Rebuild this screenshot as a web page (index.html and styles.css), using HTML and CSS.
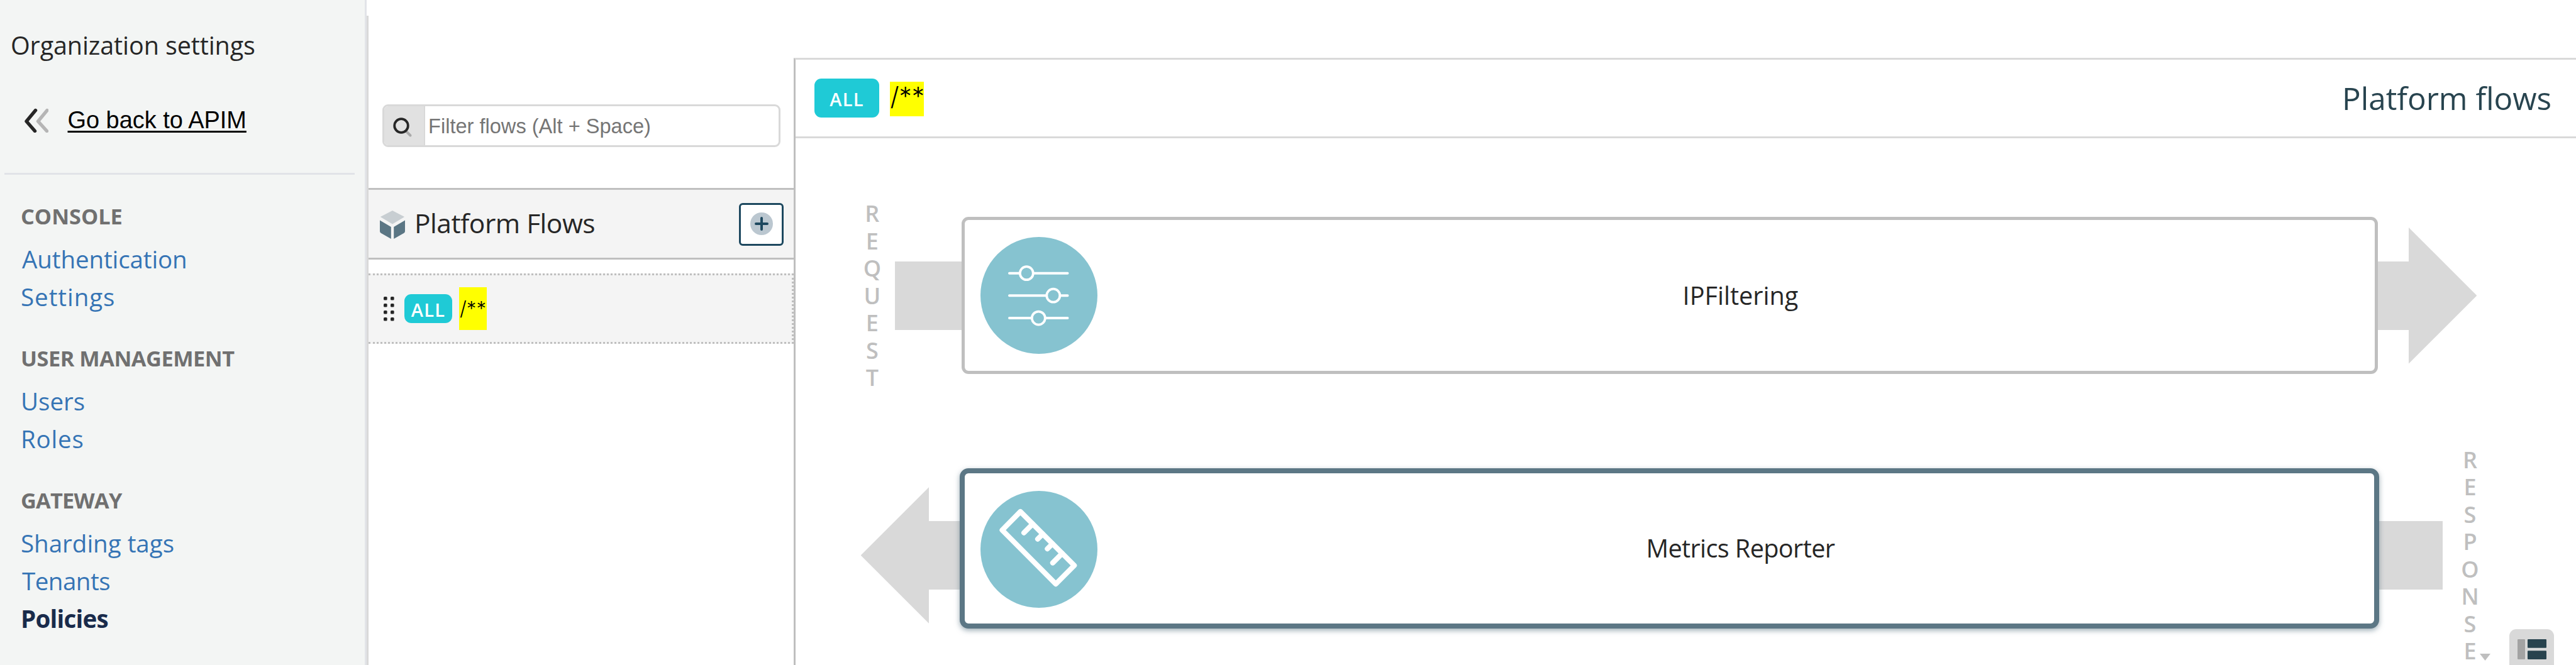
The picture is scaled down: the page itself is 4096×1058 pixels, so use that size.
FILE: index.html
```html
<!DOCTYPE html>
<html lang="en">
<head>
<meta charset="utf-8">
<title>Platform flows</title>
<link rel="stylesheet" href="styles.css">
</head>
<body>
<div class="app">
  <aside class="sidebar">
    <h1 class="sidebar-title">Organization settings</h1>
    <div class="back">
      <svg class="back-icon" width="40" height="40" viewBox="0 0 40 40" fill="none" stroke-width="5.400" stroke-linecap="round" stroke-linejoin="round">
        <path stroke="#b5b5b5" d="M38 4.500 23.500 22l14 15.500"/>
        <path stroke="#262626" d="M19.500 4.500 5 22 18.500 37.500"/>
      </svg>
      <a class="back-link">Go back to APIM</a>
    </div>
    <nav class="nav">
      <section class="group group-console">
        <h2>CONSOLE</h2>
        <a class="auth">Authentication</a>
        <a class="settings">Settings</a>
      </section>
      <section class="group group-users">
        <h2>USER MANAGEMENT</h2>
        <a class="users">Users</a>
        <a class="roles">Roles</a>
      </section>
      <section class="group group-gateway">
        <h2>GATEWAY</h2>
        <a class="tags">Sharding tags</a>
        <a class="tenants">Tenants</a>
        <a class="active">Policies</a>
      </section>
    </nav>
  </aside>

  <main class="workspace">
    <section class="flows">
      <div class="search">
        <span class="search-icon">
          <svg width="34" height="40" viewBox="0 0 34 40" fill="none">
            <path stroke="#aaaaaa" stroke-width="4" stroke-linecap="round" d="M22.500 28.500l6 6"/>
            <circle cx="14" cy="19" r="10.800" stroke="#262626" stroke-width="3.800"/>
          </svg>
        </span>
        <span class="search-text">Filter flows (Alt + Space)</span>
      </div>
      <header class="flows-header">
        <svg class="cube" width="40" height="45" viewBox="0 0 40 45">
          <path fill="#c8ced2" d="M20 0 39.200 10 20 21.500.8 10z"/>
          <path fill="#5b7684" d="M0 15.500 17.800 26v19L2 36Q0 35 0 33zM40 15.500 22.200 26v19L38 36q2-1 2-3z"/>
        </svg>
        <span class="flows-title">Platform Flows</span>
        <button class="add">
          <svg width="36" height="36" viewBox="0 0 36 36">
            <circle cx="18" cy="18" r="18" fill="#bbc7d0"/>
            <path stroke="#1d485f" stroke-width="4" stroke-linecap="round" d="M18 9v18M9 18h18"/>
          </svg>
        </button>
      </header>
      <div class="flow-item">
        <svg class="grip" width="17" height="39" viewBox="0 0 17 39" fill="#262626">
          <rect x="0" y="0" width="5.600" height="5.600" rx="1.500"/><rect x="11" y="0" width="5.600" height="5.600" rx="1.500"/>
          <rect x="0" y="11" width="5.600" height="5.600" rx="1.500"/><rect x="11" y="11" width="5.600" height="5.600" rx="1.500"/>
          <rect x="0" y="22" width="5.600" height="5.600" rx="1.500"/><rect x="11" y="22" width="5.600" height="5.600" rx="1.500"/>
          <rect x="0" y="33" width="5.600" height="5.600" rx="1.500"/><rect x="11" y="33" width="5.600" height="5.600" rx="1.500"/>
        </svg>
        <span class="badge badge-small">ALL</span>
        <mark class="path path-small">/**</mark>
      </div>
    </section>

    <section class="detail">
      <header class="detail-header">
        <span class="badge">ALL</span>
        <mark class="path">/**</mark>
        <h2 class="detail-title">Platform flows</h2>
      </header>

      <div class="lane lane-request">
        <div class="letters"><span>R</span><span>E</span><span>Q</span><span>U</span><span>E</span><span>S</span><span>T</span></div>
        <div class="shaft shaft-start"></div>
        <article class="card">
          <svg class="policy-icon" width="186" height="186" viewBox="0 0 186 186" fill="none" stroke="#ffffff" stroke-linecap="round">
            <circle cx="93" cy="93" r="93" fill="#86c3d0" stroke="none"/>
            <path stroke-width="4" d="M46 57.700h92.500M46 93.200h92.500M46 129.100h92.500"/>
            <g fill="#86c3d0" stroke-width="3.800">
              <circle cx="73.300" cy="57.700" r="10.500"/>
              <circle cx="115.800" cy="93.200" r="10.500"/>
              <circle cx="92.300" cy="129.100" r="10.500"/>
            </g>
          </svg>
          <span class="card-name">IPFiltering</span>
        </article>
        <div class="shaft"></div>
        <div class="head head-right"></div>
      </div>

      <div class="lane lane-response">
        <div class="head head-left"></div>
        <div class="shaft"></div>
        <article class="card card-selected">
          <svg class="policy-icon" width="186" height="186" viewBox="0 0 186 186" fill="none" stroke="#ffffff" stroke-width="8.200" stroke-linecap="round" stroke-linejoin="round">
            <circle cx="93" cy="93" r="93" fill="#86c3d0" stroke="none"/>
            <path d="M63.500 33 34.500 62.300l85.300 85.900 29.400-29.500z"/>
            <path d="M83.100 52.700l-14 14M99.100 68.600l-8.100 8.100M114.500 84.100l-8.100 8.100M129.900 99.500l-15 15"/>
          </svg>
          <span class="card-name">Metrics Reporter</span>
        </article>
        <div class="shaft shaft-end"></div>
        <div class="letters"><span>R</span><span>E</span><span>S</span><span>P</span><span>O</span><span>N</span><span>S</span><span>E</span></div>
      </div>
    </section>
  </main>

  <span class="caret"></span>
  <button class="layout-toggle">
    <svg width="46" height="32" viewBox="0 0 46 32">
      <rect width="12" height="32" rx="1" fill="#a3a3a3"/>
      <rect x="16" width="30" height="13.800" rx="1" fill="#28434e"/>
      <rect x="16" y="18.200" width="30" height="13.800" rx="1" fill="#28434e"/>
    </svg>
  </button>
</div>
</body>
</html>
```

FILE: styles.css
```css
* { box-sizing: border-box; margin: 0; padding: 0; }

body {
  background: #ffffff;
  color: #262626;
  font-family: "Open Sans", "Noto Sans", sans-serif;
  overflow: hidden;
}

button { border: 0; }
svg { display: block; flex: none; }

.app {
  position: relative;
  display: flex;
  width: 4096px;
  height: 1058px;
  overflow: hidden;
}

/* Sidebar */
.sidebar {
  flex: none;
  width: 583px;
  padding-top: 42px;
  background: #f3f5f4;
  border-right: 3px solid #e2e4e8;
}

.sidebar-title {
  padding-left: 17px;
  font-size: 39.5px;
  font-weight: 400;
  line-height: 60px;
  letter-spacing: -0.1px;
}

.back {
  display: flex;
  align-items: center;
  gap: 31px;
  height: 60px;
  margin-top: 59px;
  padding-left: 36.5px;
}

.back-link {
  color: #000000;
  font-family: "Liberation Sans", Arial, sans-serif;
  font-size: 37.9px;
  line-height: 60px;
  text-decoration: underline;
  text-decoration-thickness: 2.7px;
  text-underline-offset: 3.7px;
  text-decoration-skip-ink: none;
}

.nav {
  margin: 54px 16px 0 6.5px;
  padding: 36px 0 0 26.5px;
  border-top: 3px solid #e1e3e8;
}

.group { display: flex; flex-direction: column; margin-bottom: 37.5px; }

.group h2 {
  margin-bottom: 8.4px;
  color: #707070;
  font-size: 34.3px;
  font-weight: 700;
  line-height: 60px;
}

.group a {
  color: #3574b5;
  font-size: 38.5px;
  line-height: 60px;
}

.group-users h2 { letter-spacing: -0.45px; }
.group-gateway h2 { letter-spacing: -0.75px; }
.group .auth { padding-left: 2px; letter-spacing: -0.1px; }
.group .settings { letter-spacing: 0.95px; }
.group .roles { letter-spacing: 0.8px; }
.group .tenants { padding-left: 2px; letter-spacing: -0.5px; }
.group .active { color: #192b4b; font-weight: 700; letter-spacing: -0.75px; }

/* Workspace */
.workspace {
  display: flex;
  flex: 1;
  margin-top: 25px;
  border-left: 3px solid #d9d9d9;
}

.flows { flex: none; width: 676px; padding-top: 141px; }

.search {
  display: flex;
  width: 633px;
  height: 68px;
  margin-left: 21.5px;
  border: 3px solid #d9d9d9;
  border-radius: 9px;
  overflow: hidden;
}

.search-icon {
  display: flex;
  align-items: center;
  width: 65px;
  padding: 1px 0 0 13.5px;
  background: #e1e1e1;
  border-right: 2px solid #d9d9d9;
}

.search-text {
  padding-left: 5.5px;
  color: #757575;
  font-family: "Liberation Sans", Arial, sans-serif;
  font-size: 32.6px;
  line-height: 64px;
}

.flows-header {
  display: flex;
  align-items: center;
  height: 114px;
  margin-top: 65px;
  padding: 2px 16px 0 18px;
  background: #f4f4f4;
  border-top: 3px solid #bfbfbf;
  border-bottom: 3px solid #bfbfbf;
}

.flows-title {
  flex: 1;
  margin: 0 0 5px 15px;
  font-size: 42.5px;
  letter-spacing: -0.5px;
  line-height: 60px;
}

.add {
  display: flex;
  align-items: center;
  justify-content: center;
  width: 71px;
  height: 68px;
  padding-bottom: 2px;
  background: #ffffff;
  border: 3px solid #1d485f;
  border-radius: 6px;
}

.flow-item {
  display: flex;
  align-items: center;
  height: 112px;
  margin-top: 22px;
  padding-left: 24px;
  background: #f4f4f4;
  border: 3px dotted #bfbfbf;
  border-left: 0;
}

.badge {
  display: flex;
  align-items: center;
  justify-content: center;
  width: 103px;
  height: 62px;
  padding-top: 3px;
  background: #1fcad6;
  border-radius: 11px;
  color: #ffffff;
  font-size: 29px;
  font-weight: 600;
  letter-spacing: 1.2px;
  line-height: 40px;
}

.badge-small { width: 76px; height: 46px; margin-left: 16px; }

.path {
  width: 54.5px;
  height: 54.5px;
  padding-left: 1px;
  background: #ffff00;
  color: #000000;
  font-family: Inter, sans-serif;
  font-size: 40.4px;
  font-weight: 300;
  line-height: 47px;
}

.path-small {
  width: 43.5px;
  height: 68px;
  margin-left: 11px;
  font-size: 31.2px;
  line-height: 68px;
}

/* Flow detail */
.detail {
  flex: 1;
  margin-top: 67px;
  border-top: 3px solid #d9d9d9;
  border-left: 3px solid #bfbfbf;
}

.detail-header {
  display: flex;
  align-items: center;
  height: 125px;
  padding: 0 39px 0 30px;
  border-bottom: 3px solid #d9d9d9;
}

.detail-header .path { margin: 3px 0 0 16.5px; }

.detail-title {
  flex: 1;
  color: #28444f;
  font-size: 49.4px;
  font-weight: 400;
  line-height: 60px;
  text-align: right;
}

.lane { display: flex; align-items: center; }
.lane-request { height: 304.5px; margin-top: 98px; padding-left: 101.8px; }
.lane-response { height: 348px; margin-top: 87px; padding-left: 103.6px; }

.letters {
  display: flex;
  flex: none;
  flex-direction: column;
  width: 40px;
  color: #bfbfbf;
  font-size: 36px;
  font-weight: 600;
  line-height: 43.5px;
  text-align: center;
}

.lane-request .letters { margin-right: 16.4px; }
.lane-response .letters { margin-left: 23.5px; }

.shaft { flex: none; width: 49px; height: 108.6px; background: #d9d9d9; }
.shaft-start { width: 106px; }
.shaft-end { width: 100.6px; }

.head { flex: none; width: 108.8px; height: 217.5px; background: #d9d9d9; }
.head-right { clip-path: polygon(0 0, 100% 50%, 0 100%); }
.head-left { clip-path: polygon(100% 0, 0 50%, 100% 100%); }

.card {
  display: flex;
  flex: none;
  align-items: center;
  gap: 16px;
  width: 2251.4px;
  height: 250px;
  padding-left: 25px;
  background: #ffffff;
  border: 5px solid #bfbfbf;
  border-radius: 11px;
}

.card-selected {
  position: relative;
  width: 2257px;
  height: 255.3px;
  margin-bottom: 22px;
  border: 8px solid #5c7785;
  border-radius: 14px;
  box-shadow: 0 3px 8px rgba(92, 119, 133, 0.6);
}

.card-selected .policy-icon { margin-top: 3px; }

.card-name {
  flex: 1;
  margin-bottom: 1px;
  padding-right: 2px;
  font-size: 39.6px;
  line-height: 60px;
  text-align: center;
}

.card-selected .card-name { letter-spacing: -0.6px; }

/* Overlay controls in the bottom corner */
.caret {
  position: absolute;
  right: 136px;
  bottom: 7px;
  width: 17px;
  height: 11px;
  background: #bfbfbf;
  clip-path: polygon(0 0, 100% 0, 50% 100%);
}

.layout-toggle {
  position: absolute;
  right: 35px;
  bottom: 0;
  width: 71px;
  height: 57px;
  padding: 16px 0 0 12.5px;
  background: #d9d9d9;
  border-radius: 11px 11px 0 0;
}

.layout-toggle svg { margin-bottom: 9px; }
```
